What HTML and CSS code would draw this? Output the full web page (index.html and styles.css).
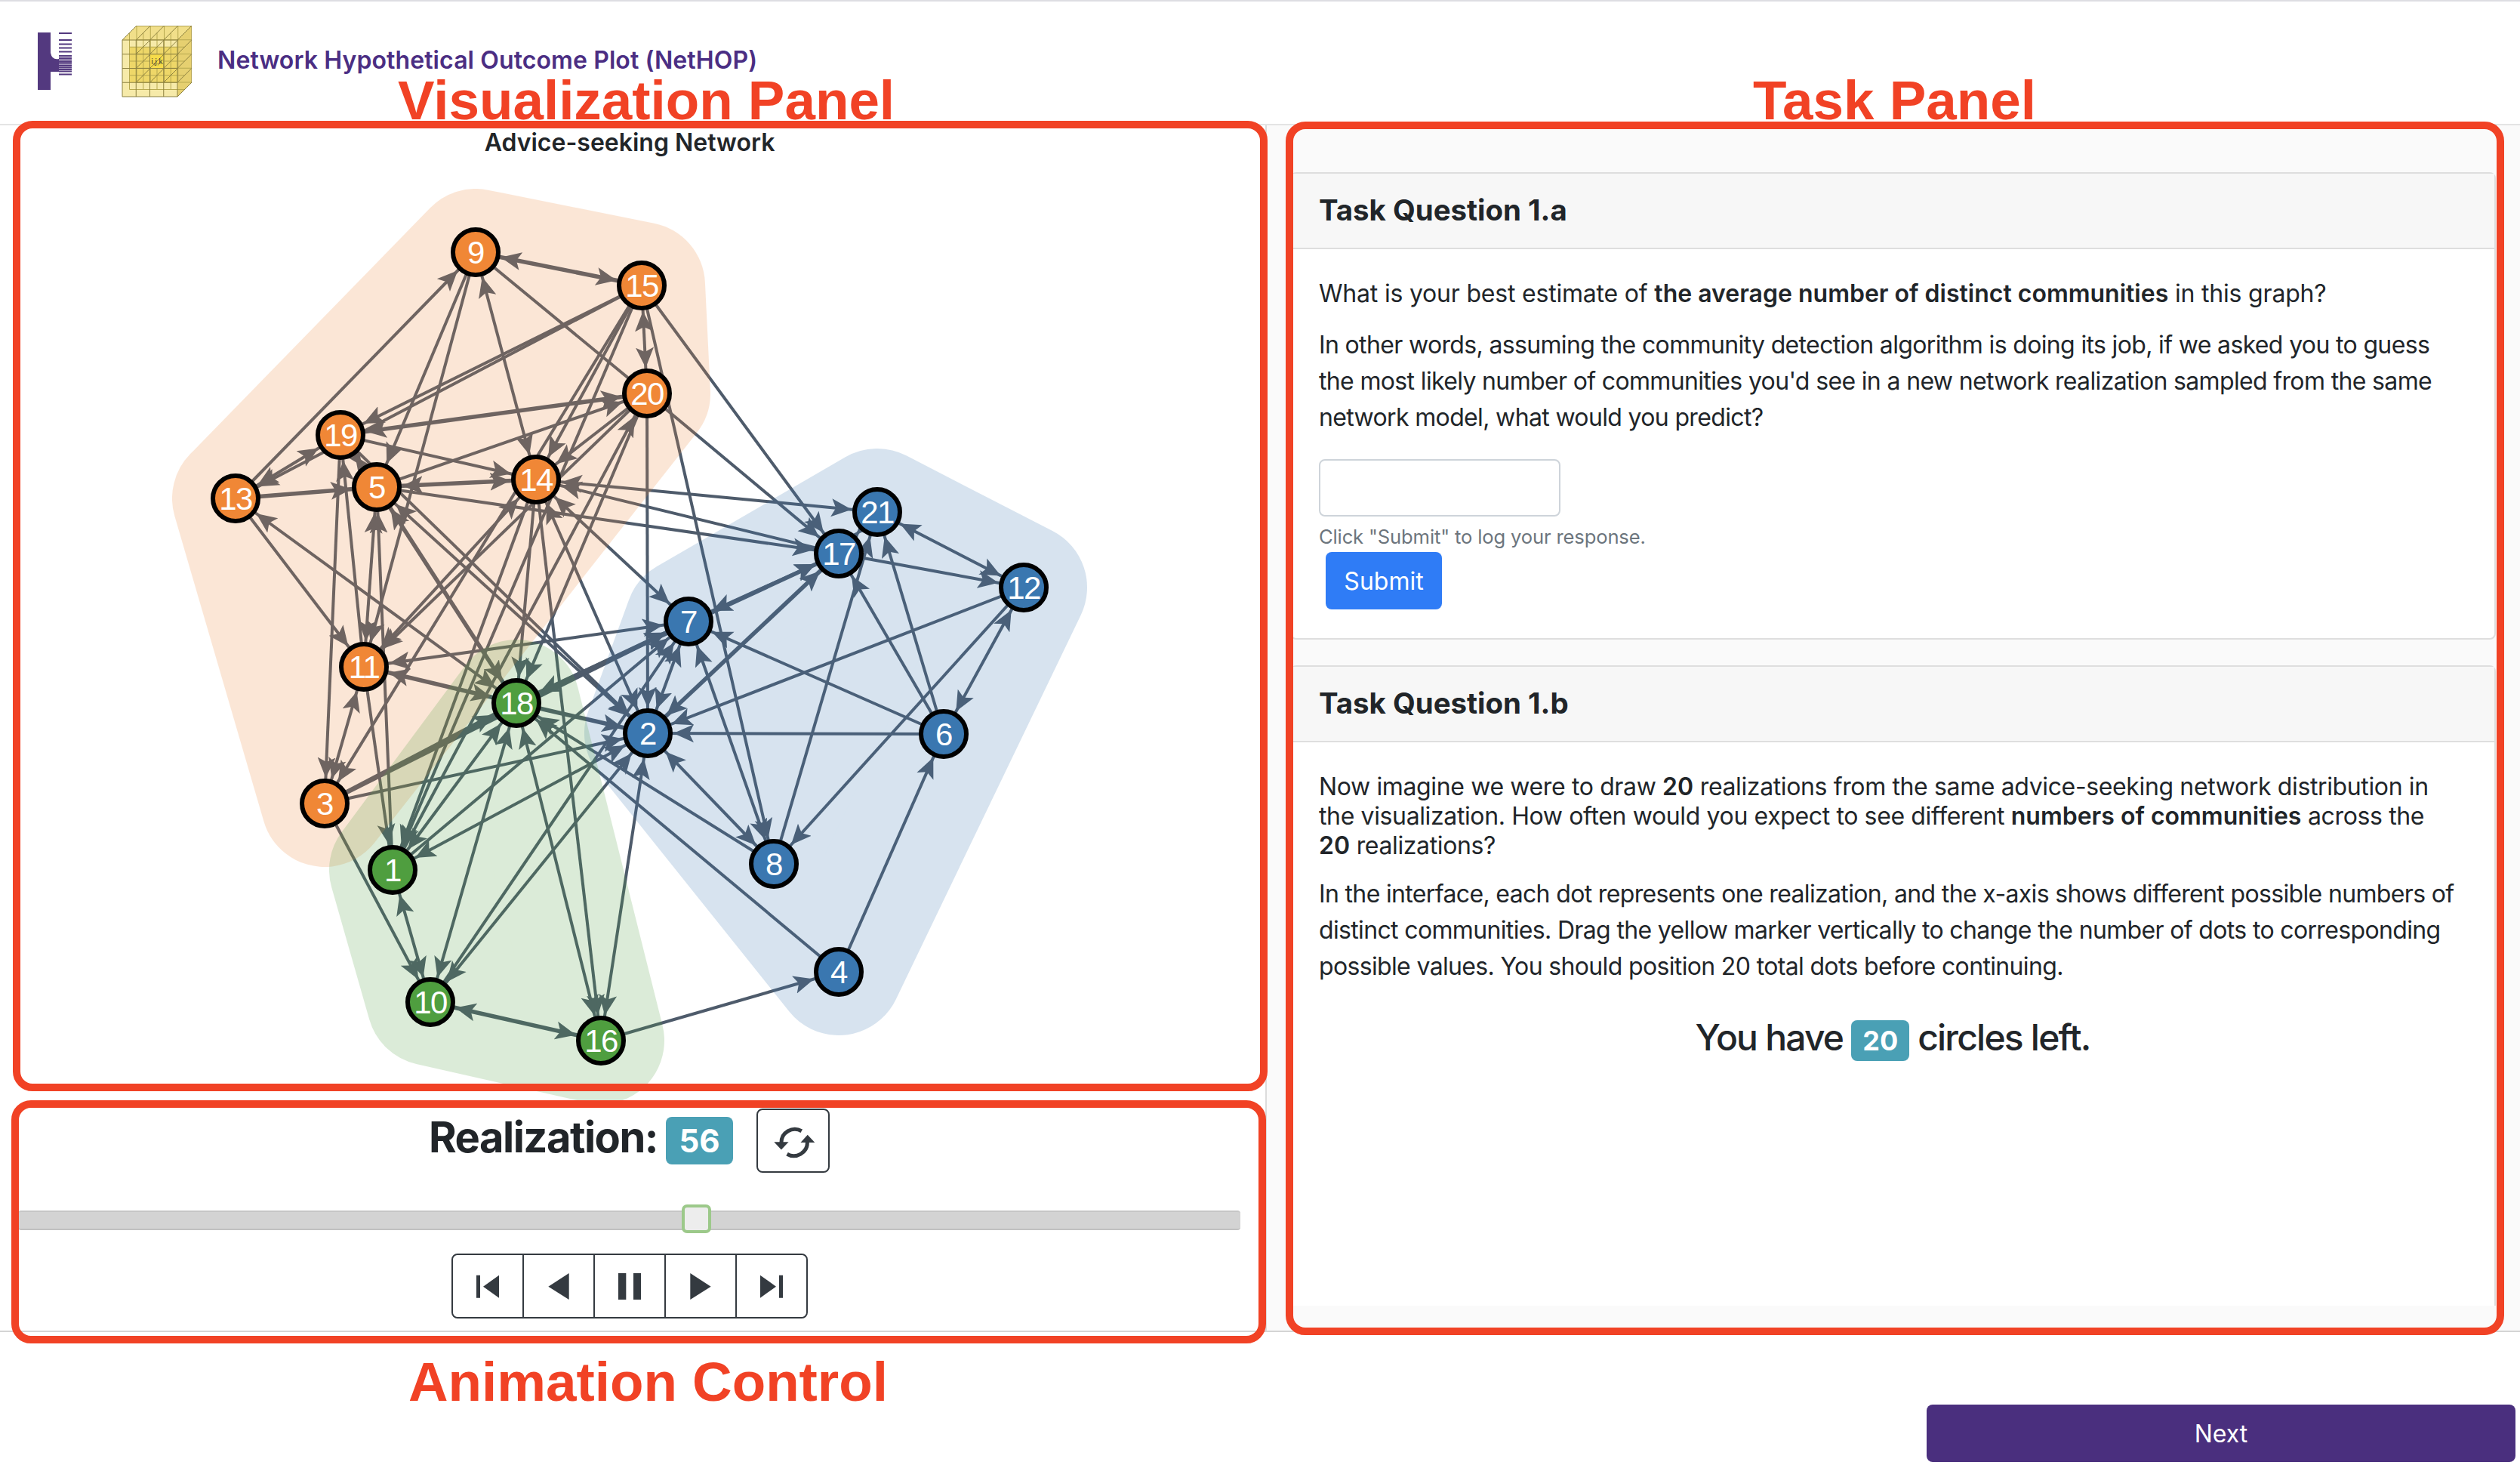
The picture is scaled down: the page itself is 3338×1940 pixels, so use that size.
FILE: index.html
```html
<!DOCTYPE html>
<html lang="en">
<head>
    <meta charset="UTF-8">
    <title>Network Hypothetical Outcome Plot (NetHOP)</title>
    <link rel="stylesheet" href="styles.css">
</head>
<body>
    <header class="topbar">
        <svg class="logo" viewBox="0 0 46 77">
            <rect width="17" height="76" fill="#53397f"/>
            <path d="M17 27Q19 37 28 35V52H17Z" fill="#53397f"/>
            <path class="logo-comb" d="M28 1H45M28 10H45M28 15.5H45M28 20.5H45M28 25.5H45M28 31H45M28 34H45M28 36.5H45M28 39H45M28 41.5H45M28 44H45M28 46.5H45M28 49H45M28 51.5H45M28 55.5H45"/>
        </svg>
        <svg class="cube" viewBox="0 0 93 95">
            <path class="cube-face-side" d="M74 19L93 0V75L74 94Z"/>
            <path class="cube-face-top" d="M1 19L20 0H93L74 19Z"/>
            <path class="cube-face-front" d="M1 19H74V94H1Z"/>
            <path class="cube-inner" d="M10 28H74V75H10Z"/>
            <path class="cube-grid cube-grid-back" d="M20 0V75M38.25 0V75M56.5 0V75M74.75 0V75M20 0H93M20 18.75H93M20 37.5H93M20 56.25H93M20 75H93"/>
            <path class="cube-grid cube-grid-back" d="M10.5 9.5V84.500M28.75 9.500V84.500M47 9.500V84.500M65.250 9.500V84.500M10.500 28.250H83.500M10.500 47H83.500M10.500 65.750H83.500M10.500 84.500H83.500"/>
            <rect class="cube-cell" x="38" y="38" width="18" height="19"/>
            <path class="cube-grid" d="M1 19V94M19.250 19V94M37.500 19V94M55.750 19V94M74 19V94M1 19H74M1 37.750H74M1 56.500H74M1 75.250H74M1 94H74"/>
            <path class="cube-grid" d="M1 19L20 0M19.250 19L38.250 0M37.500 19L56.500 0M55.750 19L74.750 0M74 19L93 0H20M74 37.750L93 18.750M74 56.500L93 37.500M74 75.250L93 56.250M74 94L93 75V0M19.250 37.750L38.250 18.750M37.500 37.750L56.500 18.750M55.750 37.750L74.750 18.750M19.250 56.500L38.250 37.500M37.500 56.500L56.500 37.500M55.750 56.500L74.750 37.500M19.250 75.250L38.250 56.250M37.500 75.250L56.500 56.250M55.750 75.250L74.750 56.250"/>
            <text class="cube-label" x="47" y="51">i,j,k</text>
        </svg>
        <h1 class="site-title">Network Hypothetical Outcome Plot (NetHOP)</h1>
    </header>

    <main class="study-row">
        <section class="viz-col">
            <h2 class="chart-title">Advice-seeking Network</h2>
            <svg id="network" class="network" viewBox="0 210 1676 1258"></svg>

            <div class="controls">
                <div class="realization-row">
                    <h3 class="realization-label">Realization:</h3>
                    <span class="badge badge-big">56</span>
                    <button class="icon-btn refresh-btn">
                        <svg class="refresh-icon" viewBox="130 90 175 135">
                            <path class="refresh-arc" d="M247 116A54 54 0 0 0 166 163"/>
                            <path class="refresh-arc" d="M189 208A54 54 0 0 0 270 160"/>
                            <path class="refresh-head" d="M137 160H195L166 191Z"/>
                            <path class="refresh-head" d="M243 162H300L271 131Z"/>
                        </svg>
                    </button>
                </div>

                <div class="slider">
                    <div class="slider-thumb"></div>
                </div>

                <div class="player">
                    <button class="player-btn">
                        <svg class="player-icon" viewBox="0 0 90 105">
                            <path d="M0 8H15V98H0ZM27 53L90 8V98Z"/>
                        </svg>
                    </button>
                    <button class="player-btn">
                        <svg class="player-icon" viewBox="0 0 90 105">
                            <path d="M4 53L86 0V105Z"/>
                        </svg>
                    </button>
                    <button class="player-btn">
                        <svg class="player-icon" viewBox="0 0 90 105">
                            <path d="M0 0H31V105H0ZM60 0H91V105H60Z"/>
                        </svg>
                    </button>
                    <button class="player-btn">
                        <svg class="player-icon" viewBox="0 0 90 105">
                            <path d="M4 0L86 53L4 105Z"/>
                        </svg>
                    </button>
                    <button class="player-btn">
                        <svg class="player-icon" viewBox="0 0 90 105">
                            <path d="M0 8L63 53L0 98ZM75 8H90V98H75Z"/>
                        </svg>
                    </button>
                </div>
            </div>
        </section>

        <section class="task-col">
            <div class="card card-a">
                <div class="card-header">
                    <h5>Task Question 1.a</h5>
                </div>
                <div class="card-body">
                    <p class="lead-q">What is your best estimate of <b>the average number of distinct communities</b> in this graph?</p>
                    <p>In other words, assuming the community detection algorithm is doing its job, if we asked you to guess the most likely number of communities you'd see in a new network realization sampled from the same network model, what would you predict?</p>
                    <input class="answer" type="text">
                    <small class="help">Click "Submit" to log your response.</small>
                    <button class="submit-btn">Submit</button>
                </div>
            </div>

            <div class="card card-b">
                <div class="card-header">
                    <h5>Task Question 1.b</h5>
                </div>
                <div class="card-body">
                    <p class="tight">Now imagine we were to draw <b>20</b> realizations from the same advice-seeking network distribution in the visualization. How often would you expect to see different <b>numbers of communities</b> across the <b>20</b> realizations?</p>
                    <p>In the interface, each dot represents one realization, and the x-axis shows different possible numbers of distinct communities. Drag the yellow marker vertically to change the number of dots to corresponding possible values. You should position 20 total dots before continuing.</p>
                    <h4 class="circles-left">You have <span class="badge">20</span> circles left.</h4>
                </div>
            </div>
        </section>
    </main>

    <footer class="bottom">
        <button class="next-btn">Next</button>
    </footer>

    <!-- red annotations drawn over the app -->
    <div class="red-box box-viz"></div>
    <div class="red-box box-anim"></div>
    <div class="red-box box-task"></div>
    <div class="red-label label-viz">Visualization Panel</div>
    <div class="red-label label-task">Task Panel</div>
    <div class="red-label label-anim">Animation Control</div>

    <script src="graph.js"></script>
</body>
</html>
```

FILE: styles.css
```css
* {
    box-sizing: border-box;
}
html, body {
    margin: 0;
    padding: 0;
}
body {
    position: relative;
    width: 3338px;
    height: 1940px;
    overflow: hidden;
    font-family: Inter, "Liberation Sans", sans-serif;
    font-size: 32px;
    line-height: 48px;
    color: #212529;
    background: #fff;
    border-top: 2px solid #dddde2;
}

/* header */
.topbar {
    display: flex;
    align-items: flex-start;
    height: 162px;
}
.logo {
    width: 46px;
    height: 77px;
    margin: 41px 0 0 50px;
}
.logo-comb {
    stroke: #53397f;
    stroke-width: 1.8;
    fill: none;
}
.cube {
    width: 93px;
    height: 95px;
    margin: 32px 0 0 65px;
}
.cube-face-top { fill: #f1df8a; }
.cube-face-side { fill: #e6d070; }
.cube-face-front { fill: #f6eaa9; }
.cube-inner { fill: #eed768; }
.cube-cell { fill: #f7dc4a; }
.cube-grid {
    fill: none;
    stroke: #8c8140;
    stroke-width: 1;
}
.cube-grid-back {
    stroke: #b7a94f;
}
.cube-label {
    font-family: "Liberation Sans", sans-serif;
    font-size: 10px;
    fill: #333;
    text-anchor: middle;
}
.site-title {
    margin: 58px 0 0 34px;
    font-size: 32px;
    line-height: 40px;
    font-weight: 600;
    letter-spacing: 0.1px;
    color: #4b2e83;
}

/* main row */
.study-row {
    display: flex;
    height: 1600px;
    border-top: 2px solid #e4e4e4;
    border-bottom: 2px solid #d4d4d4;
}
.viz-col {
    width: 1678px;
    border-right: 2px solid #dcdcdc;
    display: flex;
    flex-direction: column;
}
.chart-title {
    margin: 0;
    height: 44px;
    padding-right: 8px;
    text-align: center;
    font-size: 32px;
    line-height: 46px;
    font-weight: 600;
}
.network {
    display: block;
    width: 1676px;
    height: 1258px;
}
.edge {
    stroke: #4e5b6b;
    stroke-width: 4;
}
.edge-thick {
    stroke-width: 5.5;
}
.arrow-head {
    fill: #4e5b6b;
}
.hull {
    stroke-width: 168;
    stroke-linejoin: round;
    opacity: 0.2;
}
.hull-orange { fill: #f0883a; stroke: #f0883a; }
.hull-blue { fill: #3b78b2; stroke: #3b78b2; }
.hull-green { fill: #4f9f3f; stroke: #4f9f3f; }
.node circle {
    stroke: #000;
    stroke-width: 6;
}
.node-orange circle { fill: #f08736; }
.node-blue circle { fill: #3a77b0; }
.node-green circle { fill: #4f9e3f; }
.node text {
    font-family: "Liberation Sans", sans-serif;
    font-size: 42px;
    letter-spacing: -1.5px;
    fill: #fff;
    text-anchor: middle;
}

/* animation control */
.controls {
    padding: 0 33px 0 24px;
}
.realization-row {
    display: flex;
    align-items: center;
    justify-content: center;
    height: 85px;
}
.realization-label {
    margin: 0 11px 10px 0;
    font-size: 56px;
    line-height: 64px;
    font-weight: 700;
    letter-spacing: -1.5px;
}
.badge {
    display: inline-block;
    padding: 0 15px;
    background: #4aa0b5;
    color: #fff;
    font-weight: 700;
    letter-spacing: 0;
    border-radius: 8px;
    font-size: 36px;
    line-height: 54px;
}
.badge-big {
    width: 89px;
    padding: 0;
    text-align: center;
    font-size: 42px;
    line-height: 63px;
}
.icon-btn {
    width: 97px;
    height: 85px;
    margin-left: 31px;
    padding: 2px 0 0 3px;
    display: flex;
    align-items: center;
    justify-content: center;
    background: #fff;
    border: 2px solid #343a40;
    border-radius: 8px;
}
.refresh-icon {
    width: 58px;
    height: 45px;
}
.refresh-arc {
    fill: none;
    stroke: #343a40;
    stroke-width: 15;
}
.refresh-head {
    fill: #343a40;
}
.slider {
    position: relative;
    height: 26px;
    margin-top: 50px;
    background: #d3d3d3;
    border-top: 2px solid #c6c6c6;
    border-bottom: 2px solid #c0c0c0;
    border-radius: 4px;
}
.slider-thumb {
    position: absolute;
    left: 879px;
    top: -10px;
    width: 39px;
    height: 38px;
    background: #ededed;
    border: 4px solid #9cc98a;
    border-radius: 7px;
}
.player {
    display: flex;
    width: 472px;
    height: 86px;
    margin: 31px auto 0;
    border: 2px solid #343a40;
    border-radius: 8px;
}
.player-btn {
    flex: 1;
    padding: 0;
    display: flex;
    align-items: center;
    justify-content: center;
    background: #fff;
    border: 0;
    border-right: 2px solid #343a40;
    border-radius: 8px 0 0 8px;
}
.player-btn + .player-btn {
    border-radius: 0;
}
.player-btn:last-child {
    border-right: 0;
    border-radius: 0 8px 8px 0;
}
.player-icon {
    width: 30px;
    height: 35px;
    fill: #343a40;
}

/* task panel */
.task-col {
    flex: 1;
    display: flex;
    flex-direction: column;
    gap: 34px;
    padding: 62px 32px 0 31px;
    background: #fafafa;
}
.card {
    background: #fff;
    border: 2px solid #dedede;
    border-radius: 8px;
}
.card-a { height: 619px; }
.card-b {
    height: 848px;
    border-bottom: 0;
    border-radius: 8px 8px 0 0;
}
.card-header {
    height: 100px;
    padding: 0 36px;
    background: #f7f7f7;
    border-bottom: 2px solid #dedede;
}
.card-header h5 {
    margin: 0;
    font-size: 38.4px;
    line-height: 96px;
    font-weight: 700;
}
.card-body {
    padding: 35px 49px 0 36px;
}
.card-b .card-body {
    padding-top: 39px;
}
.card-body p {
    margin: 0 0 20px;
    letter-spacing: -0.65px;
}
.card-body b {
    font-weight: 600;
    letter-spacing: 0;
}
.card-body p.lead-q {
    letter-spacing: -0.2px;
}
.card-body p.tight {
    max-width: 1477px;
    line-height: 39px;
    margin-bottom: 21px;
    letter-spacing: -0.37px;
}
.answer {
    display: block;
    width: 320px;
    height: 76px;
    margin-top: 31px;
    background: #fff;
    border: 2px solid #ced4da;
    border-radius: 8px;
}
.help {
    display: block;
    margin-top: 8px;
    font-size: 25.6px;
    line-height: 38px;
    letter-spacing: -0.15px;
    color: #6c757d;
}
.submit-btn {
    display: block;
    width: 154px;
    height: 76px;
    margin: 1px 0 0 9px;
    padding: 0;
    font-family: Inter, "Liberation Sans", sans-serif;
    font-size: 32px;
    color: #fff;
    background: #2f7cf6;
    border: 0;
    border-radius: 8px;
}
.circles-left {
    margin: 41px -12px 0 0;
    text-align: center;
    font-size: 48px;
    line-height: 58px;
    font-weight: 500;
    letter-spacing: -1.8px;
}

/* footer */
.bottom {
    display: flex;
    justify-content: flex-end;
    padding: 96px 6px 0 0;
}
.next-btn {
    width: 780px;
    height: 76px;
    padding: 0;
    font-family: Inter, "Liberation Sans", sans-serif;
    font-size: 32px;
    color: #fff;
    background: #4a2f7e;
    border: 0;
    border-radius: 8px;
}

/* annotations */
.red-box {
    position: absolute;
    border: 10px solid #f14225;
    border-radius: 26px;
}
.box-viz {
    left: 17px;
    top: 158px;
    width: 1662px;
    height: 1285px;
}
.box-anim {
    left: 15px;
    top: 1455px;
    width: 1662px;
    height: 322px;
}
.box-task {
    left: 1703px;
    top: 159px;
    width: 1614px;
    height: 1607px;
}
.red-label {
    position: absolute;
    font-family: "Liberation Sans", sans-serif;
    font-size: 72.8px;
    line-height: 72px;
    font-weight: 700;
    color: #f14225;
    white-space: nowrap;
}
.label-viz {
    left: 527px;
    top: 95px;
}
.label-task {
    left: 2322px;
    top: 95px;
}
.label-anim {
    left: 541px;
    top: 1792px;
}
```

FILE: graph.js
```js
// node positions are page pixels, community is the colour
const nodes = {
    9: [630, 334, 'orange'], 15: [850, 378, 'orange'], 20: [857, 521, 'orange'],
    19: [451, 576, 'orange'], 5: [499, 645, 'orange'], 14: [710, 635, 'orange'],
    13: [312, 660, 'orange'], 11: [482, 883, 'orange'], 3: [430, 1064, 'orange'],
    21: [1162, 678, 'blue'], 17: [1111, 733, 'blue'], 12: [1356, 778, 'blue'],
    7: [912, 823, 'blue'], 2: [858, 971, 'blue'], 6: [1250, 972, 'blue'],
    8: [1025, 1144, 'blue'], 4: [1111, 1287, 'blue'],
    18: [684, 931, 'green'], 1: [520, 1152, 'green'], 10: [570, 1327, 'green'],
    16: [796, 1378, 'green']
};

const hulls = {
    orange: [9, 15, 20, 3, 13],
    blue: [21, 12, 4, 2, 7],
    green: [18, 16, 10, 1]
};

// [from, to, arrows: 1 = at "to", 2 = both, 0 = none, thick]
const edges = [
    [9, 15, 2, 1], [13, 9, 1], [9, 5, 1], [9, 11, 1], [9, 14, 2], [9, 20, 0],
    [15, 19, 1], [15, 13, 1], [15, 20, 2], [15, 14, 1], [15, 3, 1], [15, 1, 1],
    [15, 8, 1], [15, 17, 1], [20, 19, 2, 1], [5, 20, 1], [20, 17, 1], [20, 2, 1],
    [20, 14, 1], [1, 20, 1], [20, 11, 1], [20, 18, 1], [19, 14, 1], [19, 13, 2],
    [19, 5, 2, 1], [11, 19, 1], [19, 3, 1], [19, 2, 1], [5, 14, 2, 1], [13, 5, 1, 1],
    [5, 17, 1], [5, 11, 2], [1, 5, 1], [5, 18, 2, 1], [5, 2, 2], [14, 21, 2],
    [17, 14, 1], [13, 11, 1], [18, 13, 2], [14, 11, 2], [14, 1, 1], [14, 18, 1],
    [14, 16, 1], [14, 2, 2], [14, 7, 2], [3, 11, 2], [3, 7, 1, 1], [3, 18, 1, 1],
    [3, 2, 1], [3, 10, 1], [7, 11, 2], [18, 7, 2], [1, 7, 1], [10, 7, 1], [7, 2, 2],
    [7, 17, 2], [7, 8, 2], [17, 2, 2, 1], [18, 17, 1, 1], [18, 2, 1, 1], [1, 2, 2],
    [10, 2, 2], [16, 2, 2], [8, 2, 2], [8, 18, 1], [4, 18, 1], [8, 21, 1], [6, 17, 1],
    [6, 21, 1], [17, 21, 2], [17, 12, 1], [21, 12, 2], [12, 2, 1], [6, 7, 1], [6, 2, 1],
    [12, 8, 1], [6, 12, 2], [4, 6, 1], [1, 18, 2], [18, 10, 2], [18, 16, 2],
    [18, 11, 2, 1], [11, 1, 1], [1, 10, 2], [10, 16, 2, 1], [16, 4, 1]
];

const svg = document.getElementById('network');
const NS = 'http://www.w3.org/2000/svg';

function make(tag, parent, attrs) {
    const el = document.createElementNS(NS, tag);
    for (const key in attrs) {
        el.setAttribute(key, attrs[key]);
    }
    parent.appendChild(el);
    return el;
}

// arrow tip stops at the outer edge of the node circle
const defs = make('defs', svg, {});
const marker = make('marker', defs, {
    id: 'arrow',
    viewBox: '0 -13 62 26',
    refX: 61,
    refY: 0,
    markerWidth: 62,
    markerHeight: 26,
    markerUnits: 'userSpaceOnUse',
    orient: 'auto-start-reverse'
});
make('path', marker, { class: 'arrow-head', d: 'M0 -12L27 0L0 12L6 0Z' });

edges.forEach(function (e) {
    const a = nodes[e[0]];
    const b = nodes[e[1]];
    const attrs = {
        class: e[3] ? 'edge edge-thick' : 'edge',
        x1: a[0], y1: a[1], x2: b[0], y2: b[1]
    };
    if (e[2] >= 1) attrs['marker-end'] = 'url(#arrow)';
    if (e[2] === 2) attrs['marker-start'] = 'url(#arrow)';
    make('line', svg, attrs);
});

// hulls go over the edges, that is what tints the lines
for (const name in hulls) {
    const points = hulls[name].map(function (id) {
        return nodes[id][0] + ',' + nodes[id][1];
    }).join(' ');
    make('polygon', svg, { class: 'hull hull-' + name, points: points });
}

for (const id in nodes) {
    const n = nodes[id];
    const g = make('g', svg, { class: 'node node-' + n[2] });
    make('circle', g, { cx: n[0], cy: n[1], r: 30 });
    const label = make('text', g, { x: n[0], y: n[1] + 15 });
    label.textContent = id;
}
```
